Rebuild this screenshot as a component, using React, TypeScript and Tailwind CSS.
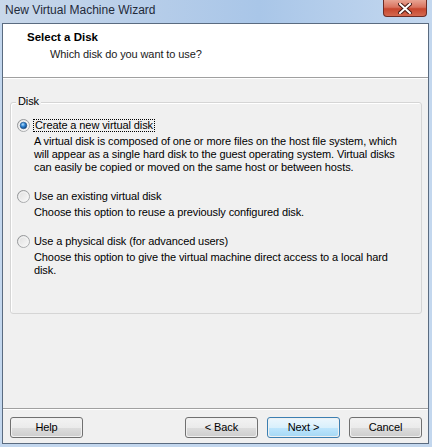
import { FC, ReactNode } from "react";

const font = "font-['Liberation_Sans',Arial,sans-serif]";

const Radio: FC<{ checked?: boolean }> = ({ checked }) => (
  <svg width="13" height="13" viewBox="0 0 13 13" className="shrink-0">
    <defs>
      <linearGradient id="rb-ring" x1="0" y1="0" x2="1" y2="1">
        <stop offset="0" stopColor="#8a8c8e" />
        <stop offset="1" stopColor="#b4b6b8" />
      </linearGradient>
      <linearGradient id="rb-face" x1="0" y1="0" x2="1" y2="1">
        <stop offset="0" stopColor="#dcdcdc" />
        <stop offset="1" stopColor="#fbfbfb" />
      </linearGradient>
      <radialGradient id="rb-dot" cx="0.4" cy="0.35" r="0.7">
        <stop offset="0" stopColor="#b9e0fb" />
        <stop offset="0.45" stopColor="#2f86d6" />
        <stop offset="1" stopColor="#0d3c74" />
      </radialGradient>
    </defs>
    <circle cx="6.5" cy="6.5" r="6" fill="url(#rb-face)" stroke="url(#rb-ring)" strokeWidth="1" />
    <circle cx="6.5" cy="6.5" r="4.5" fill="none" stroke="#f4f4f4" strokeWidth="1" />
    {checked && <circle cx="6.5" cy="6.5" r="3.3" fill="url(#rb-dot)" stroke="#1b4f86" strokeWidth="0.6" />}
  </svg>
);

const Option: FC<{ label: string; checked?: boolean; lines: string[]; focus?: boolean; className?: string }> = ({
  label,
  checked,
  lines,
  focus,
  className,
}) => (
  <div className={className}>
    <div className="flex items-center h-[13px]">
      <Radio checked={checked} />
      <span
        className={
          focus
            ? "ml-[3px] px-[1px] leading-[11px] border border-dotted border-black"
            : "ml-[4px] leading-[13px]"
        }
      >
        {label}
      </span>
    </div>
    <div className="mt-[3px] ml-[17px] leading-[13px]">
      {lines.map((l) => (
        <div key={l}>{l}</div>
      ))}
    </div>
  </div>
);

const Button: FC<{ children: ReactNode; primary?: boolean; className?: string }> = ({ children, primary, className }) => (
  <div
    className={
      "w-[73px] h-[21px] rounded-[3px] border p-[1px] " +
      (primary ? "border-[#3c7fb1] " : "border-[#707070] ") +
      (className ?? "")
    }
  >
    <div
      className={
        "h-full rounded-[2px] flex items-center justify-center text-[11px] text-black " +
        (primary
          ? "bg-[linear-gradient(#eaf6fd_0%,#d9f0fc_50%,#bee6fd_51%,#a7d9f5_100%)]"
          : "bg-[linear-gradient(#f2f2f2_0%,#ebebeb_50%,#dddddd_51%,#cfcfcf_100%)]")
      }
    >
      {children}
    </div>
  </div>
);

export default function App() {
  return (
    <div className={`w-[432px] h-[447px] flex flex-col bg-[#c3d7ee] ${font} tracking-[-0.1px] text-black overflow-hidden`}>
      {/* title bar */}
      <div className="relative h-[23px] shrink-0 bg-[linear-gradient(90deg,#c9d8ea_0%,#b6cde9_35%,#a9c6e8_60%,#c4d8ef_100%)]">
        <div className="pl-[5px] pt-[3px] text-[12px] leading-[15px] text-[#1f2a3a] tracking-normal">
          New Virtual Machine Wizard
        </div>
        <div className="absolute right-[5px] top-0 w-[44px] h-[17px] rounded-b-[4px] border border-t-0 border-[#6d2c25] bg-[linear-gradient(#e8a493_0%,#d9735f_45%,#c7462e_55%,#d4694f_100%)] flex items-center justify-center">
          <svg width="14" height="11" viewBox="0 0 14 11">
            <path d="M2 1 L12 10 M12 1 L2 10" stroke="#4a1a14" strokeWidth="4" strokeLinecap="square" />
            <path d="M2 1 L12 10 M12 1 L2 10" stroke="#ffffff" strokeWidth="2" strokeLinecap="square" />
          </svg>
        </div>
      </div>

      {/* client */}
      <div className="ml-[2px] w-[427px] h-[421px] border border-[#5a6b80] bg-[#f0f0f0] flex flex-col text-[11px]">
        <div className="h-[53px] bg-white pl-[24px] pt-[7px]">
          <div className="font-bold text-[11.5px] leading-[13px] tracking-normal">Select a Disk</div>
          <div className="mt-[4px] pl-[23px] leading-[13px] text-[#1a1a1a]">Which disk do you want to use?</div>
        </div>
        <div className="h-px bg-[#a0a0a0]" />
        <div className="h-px bg-white" />

        <div className="flex-1 px-[7px] pr-[6px]">
          <div className="relative mt-[23px] h-[212px] rounded-[3px] border border-[#d5d5d5] shadow-[inset_1px_1px_0_#ffffff] px-[6px] pt-[16px]">
            <span className="absolute left-[5px] -top-[8px] px-[2px] leading-[13px] bg-[#f0f0f0]">Disk</span>
            <Option
              checked
              focus
              label="Create a new virtual disk"
              lines={[
                "A virtual disk is composed of one or more files on the host file system, which",
                "will appear as a single hard disk to the guest operating system. Virtual disks",
                "can easily be copied or moved on the same host or between hosts.",
              ]}
            />
            <Option
              className="mt-[16px]"
              label="Use an existing virtual disk"
              lines={["Choose this option to reuse a previously configured disk."]}
            />
            <Option
              className="mt-[16px]"
              label="Use a physical disk (for advanced users)"
              lines={[
                "Choose this option to give the virtual machine direct access to a local hard",
                "disk.",
              ]}
            />
          </div>
        </div>

        <div className="h-px bg-[#a0a0a0]" />
        <div className="h-px bg-white" />
        <div className="flex pl-[7px] pr-[6px] pt-[7px] pb-[5px]">
          <Button>Help</Button>
          <div className="flex-1" />
          <Button>&lt; Back</Button>
          <Button primary className="ml-[9px]">
            Next &gt;
          </Button>
          <Button className="ml-[9px]">Cancel</Button>
        </div>
      </div>
    </div>
  );
}
